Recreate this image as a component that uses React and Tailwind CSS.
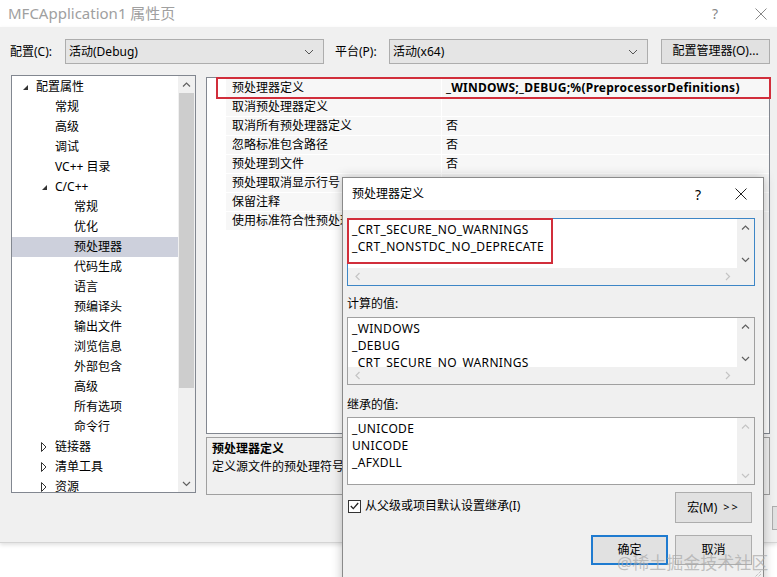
import React from "react";

const Chev = ({ dir = "up", c = "#606060" }) => {
  const pts = {
    up: "1,5.5 4.5,2 8,5.5",
    down: "1,2 4.5,5.5 8,2",
    left: "5.5,1 2,4.5 5.5,8",
    right: "2,1 5.5,4.5 2,8",
  }[dir];
  const vertical = dir === "up" || dir === "down";
  return (
    <svg width={vertical ? 9 : 7} height={vertical ? 7 : 9} viewBox={vertical ? "0 0 9 7" : "0 0 7 9"}>
      <polyline points={pts} fill="none" stroke={c} strokeWidth="1.2" />
    </svg>
  );
};

const CloseX = ({ size = 12, c = "#222" }) => (
  <svg width={size} height={size} viewBox="0 0 12 12">
    <line x1="0.5" y1="0.5" x2="11.5" y2="11.5" stroke={c} strokeWidth="1" />
    <line x1="11.5" y1="0.5" x2="0.5" y2="11.5" stroke={c} strokeWidth="1" />
  </svg>
);

const Combo = ({ text, className }) => (
  <div className={`flex items-center justify-between h-[25px] border border-[#adadad] bg-[#e5e5e5] pl-[3px] pr-[9px] ${className}`}>
    <span>{text}</span>
    <svg width="10" height="6" viewBox="0 0 10 6">
      <polyline points="1,1 5,5 9,1" fill="none" stroke="#555" strokeWidth="1" />
    </svg>
  </div>
);

const treeItems = [
  { t: "配置属性", lvl: 0, arrow: "open" },
  { t: "常规", lvl: 1 },
  { t: "高级", lvl: 1 },
  { t: "调试", lvl: 1 },
  { t: "VC++ 目录", lvl: 1 },
  { t: "C/C++", lvl: 1, arrow: "open" },
  { t: "常规", lvl: 2 },
  { t: "优化", lvl: 2 },
  { t: "预处理器", lvl: 2, sel: true },
  { t: "代码生成", lvl: 2 },
  { t: "语言", lvl: 2 },
  { t: "预编译头", lvl: 2 },
  { t: "输出文件", lvl: 2 },
  { t: "浏览信息", lvl: 2 },
  { t: "外部包含", lvl: 2 },
  { t: "高级", lvl: 2 },
  { t: "所有选项", lvl: 2 },
  { t: "命令行", lvl: 2 },
  { t: "链接器", lvl: 1, arrow: "closed" },
  { t: "清单工具", lvl: 1, arrow: "closed" },
  { t: "资源", lvl: 1, arrow: "closed" },
];

const props = [
  ["预处理器定义", "_WINDOWS;_DEBUG;%(PreprocessorDefinitions)", true],
  ["取消预处理器定义", ""],
  ["取消所有预处理器定义", "否"],
  ["忽略标准包含路径", "否"],
  ["预处理到文件", "否"],
  ["预处理取消显示行号", "否"],
  ["保留注释", "否"],
  ["使用标准符合性预处理器", "否"],
];

const TreeArrow = ({ kind }) =>
  kind === "open" ? (
    <svg width="7" height="7" viewBox="0 0 7 7">
      <polygon points="6,1 6,6 1,6" fill="#333" />
    </svg>
  ) : (
    <svg width="6" height="10" viewBox="0 0 6 10">
      <polygon points="0.5,0.5 5,5 0.5,9.5" fill="none" stroke="#333" strokeWidth="1" />
    </svg>
  );

const ListBox = ({ lines, hscroll, faded, focus, children }) => (
  <div className={`relative h-[68px] border bg-white flex flex-col ${focus ? "border-[#3d86c6]" : "border-[#a0a0a0]"}`}>
    <div className="flex flex-1 min-h-0">
      <div className="flex-1 overflow-hidden pl-[4px] pt-[2px] leading-[17px] tracking-[0.35px]">
        {lines.map((l, i) => (
          <div key={i}>{l}</div>
        ))}
      </div>
      <div className="w-[17px] bg-[#f0f0f0] flex flex-col justify-between">
        <div className="h-[17px] flex items-center justify-center">
          <Chev dir="up" c={faded ? "#c4c4c4" : "#606060"} />
        </div>
        <div className="h-[17px] flex items-center justify-center">
          <Chev dir="down" c={faded ? "#c4c4c4" : "#606060"} />
        </div>
      </div>
    </div>
    {hscroll && (
      <div className="h-[17px] flex">
        <div className="flex-1 bg-[#f0f0f0] flex items-center justify-between pl-[6px] pr-[6px]">
          <Chev dir="left" c="#c4c4c4" />
          <Chev dir="right" c="#c4c4c4" />
        </div>
        <div className="w-[17px] bg-[#f0f0f0]" />
      </div>
    )}
    {children}
  </div>
);

export default function App() {
  return (
    <div className="relative w-[777px] h-[577px] overflow-hidden bg-white text-[12px] text-black font-[family-name:'Segoe_UI','Noto_Sans','Noto_Sans_CJK_SC',sans-serif]">
      {/* title bar */}
      <div className="h-[27px] flex items-center pl-[8px] pr-[10px]">
        <span className="text-[15px] text-[#a0a0a0] flex-1">MFCApplication1 属性页</span>
        <span className="text-[14px] text-[#888] mr-[37px]">?</span>
        <CloseX size={12} c="#888" />
      </div>

      {/* window body */}
      <div className="h-[516px] bg-[#f0f0f0] border-b border-[#d4d4d4] shadow-[0_2px_4px_rgba(0,0,0,0.12)]">
        <div className="flex items-center pt-[12px] pl-[10px]">
          <span className="w-[55px]">配置(C):</span>
          <Combo text="活动(Debug)" className="w-[259px]" />
          <span className="ml-[11px] w-[54px]">平台(P):</span>
          <Combo text="活动(x64)" className="w-[259px]" />
          <div className="ml-[13px] -mt-[1px] w-[109px] h-[25px] border border-[#adadad] bg-[#e1e1e1] flex items-center justify-center">
            配置管理器(O)...
          </div>
        </div>

        <div className="flex items-start mt-[11px] pl-[11px] h-[420px]">
          {/* tree */}
          <div className="w-[185px] h-[418px] border border-[#828790] bg-white flex">
            <div className="flex-1 overflow-hidden pt-[1px]">
              {treeItems.map((it, i) => {
                const tx = 36 + 19 * it.lvl - 12;
                return (
                  <div key={i} className={`h-[20px] flex items-center ${it.sel ? "bg-[#cdd0dc]" : ""}`}>
                    {it.arrow ? (
                      <>
                        <div style={{ width: tx - 14 }} />
                        <div className="w-[14px] flex items-center">
                          <TreeArrow kind={it.arrow} />
                        </div>
                      </>
                    ) : (
                      <div style={{ width: tx }} />
                    )}
                    <span>{it.t}</span>
                  </div>
                );
              })}
            </div>
            <div className="w-[17px] bg-[#f0f0f0] flex flex-col">
              <div className="h-[17px] flex items-center justify-center">
                <Chev dir="up" />
              </div>
              <div className="h-[295px] mx-[1px] bg-[#cdcdcd]" />
              <div className="flex-1" />
              <div className="h-[17px] flex items-center justify-center">
                <Chev dir="down" />
              </div>
            </div>
          </div>

          {/* property grid + description */}
          <div className="ml-[10px] w-[564px] pt-[2px] flex flex-col">
            <div className="h-[357px] border border-[#828790] bg-white pt-[1px]">
              {props.map(([n, v, bold], i) => (
                <div key={i} className="h-[19px] flex">
                  <div className="w-[19px]" />
                  <div className="w-[215px] bg-[#f7f7f7] border-b border-white pl-[6px] flex items-center">{n}</div>
                  <div className="w-[1px] bg-white" />
                  <div className={`flex-1 bg-[#f7f7f7] border-b border-white pl-[4px] flex items-center ${bold ? "font-bold tracking-[0.25px]" : ""}`}>{v}</div>
                </div>
              ))}
            </div>
            <div className="mt-[3px] h-[58px] border border-[#a0a0a0] px-[5px] pt-[2px] leading-[18px]">
              <div className="font-bold">预处理器定义</div>
              <div>定义源文件的预处理符号。</div>
            </div>
          </div>
        </div>

        <div className="flex pl-[772px] pt-[11px]">
          <div className="shrink-0 w-[80px] h-[24px] border border-[#adadad] bg-[#e1e1e1]" />
        </div>
      </div>

      {/* red annotation on property row */}
      <div className="absolute left-[216px] top-[77px] w-[555px] h-[22px] border-2 border-[#d12e3b]" />

      {/* dialog */}
      <div className="absolute left-[342px] top-[177px] w-[422px] h-[412px] border border-[#8a8a8a] bg-[#f0f0f0] shadow-[0_0_10px_rgba(0,0,0,0.25)]">
        <div className="h-[32px] bg-white flex items-center pl-[9px] pr-[16px]">
          <span className="flex-1">预处理器定义</span>
          <span className="text-[14px] mr-[34px]">?</span>
          <CloseX size={12} c="#222" />
        </div>
        <div className="pl-[4px] pr-[8px] pt-[8px]">
          <ListBox lines={["_CRT_SECURE_NO_WARNINGS", "_CRT_NONSTDC_NO_DEPRECATE"]} hscroll focus>
            <div className="absolute left-[-1px] top-[-1px] w-[206px] h-[46px] border-2 border-[#d12e3b]" />
          </ListBox>
          <div className="pt-[9px] pb-[4px] leading-[18px]">计算的值:</div>
          <ListBox lines={["_WINDOWS", "_DEBUG", "_CRT_SECURE_NO_WARNINGS"]} hscroll />
          <div className="pt-[11px] pb-[3px] leading-[18px]">继承的值:</div>
          <ListBox lines={["_UNICODE", "UNICODE", "_AFXDLL"]} faded />
          <div className="mt-[7px] flex items-start justify-between pr-[3px]">
            <div className="flex items-center ml-[1px] mt-[5px]">
              <div className="w-[13px] h-[13px] border border-[#333] bg-white flex items-center justify-center">
                <svg width="9" height="8" viewBox="0 0 9 8">
                  <polyline points="0.8,4 3.3,6.6 8.2,1" fill="none" stroke="#222" strokeWidth="1.3" />
                </svg>
              </div>
              <span className="ml-[4px]">从父级或项目默认设置继承(I)</span>
            </div>
            <div className="w-[77px] h-[31px] border border-[#adadad] bg-[#e1e1e1] flex items-center justify-center">
              宏(M) <span className="ml-[6px] tracking-[2px] text-[11px]">&gt;&gt;</span>
            </div>
          </div>
          <div className="mt-[12px] flex justify-end gap-[7px] pr-[3px]">
            <div className="w-[77px] h-[30px] border-2 border-[#1f7bd0] bg-[#e1e1e1] flex items-center justify-center">确定</div>
            <div className="w-[77px] h-[30px] border border-[#adadad] bg-[#e1e1e1] flex items-center justify-center">取消</div>
          </div>
        </div>
        <svg className="absolute right-[1px] top-[392px]" width="9" height="9" viewBox="0 0 9 9">
          <line x1="8" y1="1" x2="1" y2="8" stroke="#aaa" strokeDasharray="1 1" />
          <line x1="8" y1="4" x2="4" y2="8" stroke="#aaa" strokeDasharray="1 1" />
        </svg>
      </div>

      {/* watermark */}
      <div className="absolute left-[617px] top-[550px] text-[17px] text-[#a8a8a8]/70 whitespace-nowrap">@稀土掘金技术社区</div>
    </div>
  );
}
